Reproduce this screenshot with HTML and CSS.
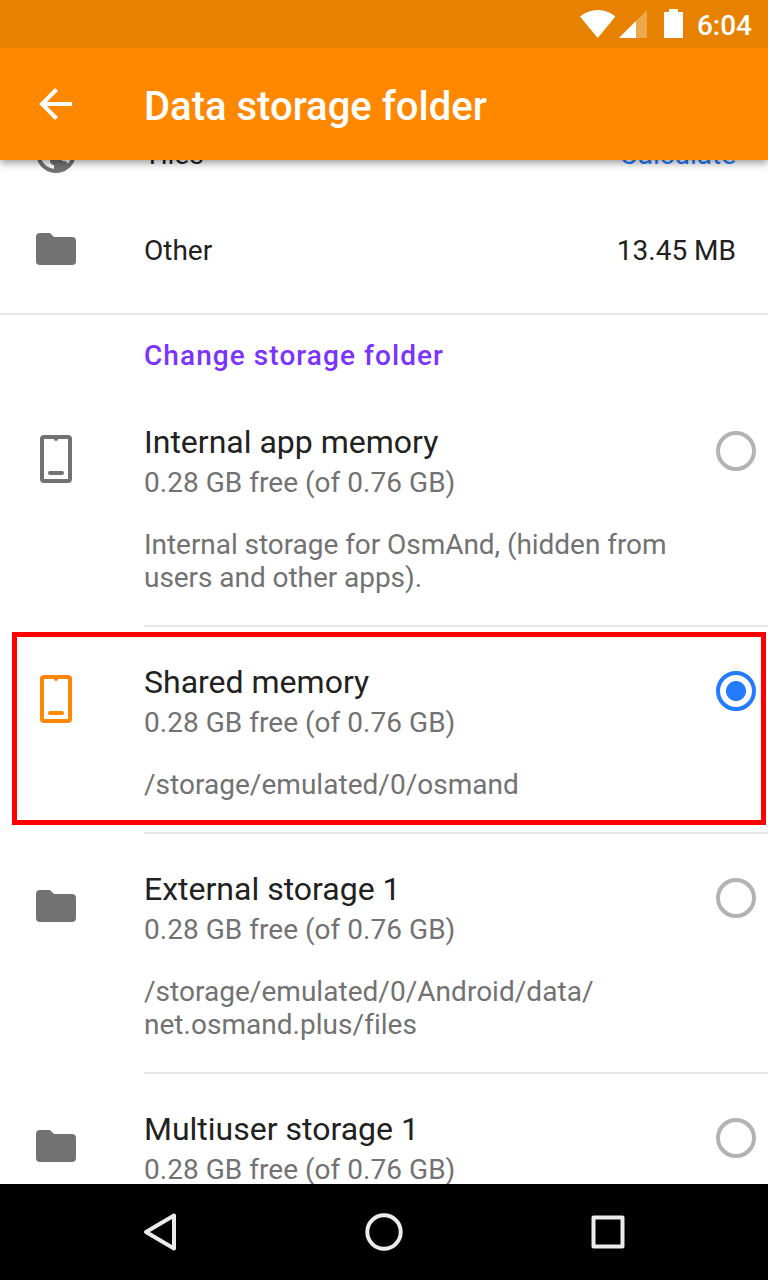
FILE: index.html
```html
<!DOCTYPE html>
<html lang="en">
<head>
<meta charset="utf-8">
<title>Data storage folder</title>
<link rel="stylesheet" href="styles.css">
</head>
<body>
<svg class="defs" width="0" height="0" aria-hidden="true">
  <symbol id="folder" viewBox="0 0 24 24"><path d="M4 4h4.400c.5 0 .8.1 1.100.5L11 6h9a2 2 0 0 1 2 2v10a2 2 0 0 1-2 2H4a2 2 0 0 1-2-2V6a2 2 0 0 1 2-2z" fill="currentColor"/></symbol>
  <symbol id="phone" viewBox="0 0 48 48"><rect x="10" y="2" width="28" height="44" rx="2" fill="none" stroke="currentColor" stroke-width="4"/><path d="M22 3h4v1a2 2 0 0 1-4 0z" fill="currentColor"/><rect x="16" y="36" width="16" height="4" rx="2" fill="currentColor"/></symbol>
  <symbol id="globe" viewBox="0 0 24 24"><path fill="currentColor" d="M12 2C6.480 2 2 6.480 2 12s4.480 10 10 10 10-4.480 10-10S17.520 2 12 2zm-1 17.930c-3.950-.49-7-3.850-7-7.930 0-.62.080-1.210.21-1.790L9 15v1c0 1.100.9 2 2 2v1.930zm6.900-2.540c-.26-.81-1-1.390-1.900-1.390h-1v-3c0-.55-.45-1-1-1H8v-2h2c.55 0 1-.45 1-1V7h2c1.100 0 2-.9 2-2v-.41c2.930 1.190 5 4.060 5 7.410 0 2.080-.8 3.970-2.100 5.390z"/></symbol>
</svg>
<div class="screen">
  <div class="status">
    <svg width="36" height="28" viewBox="0 0 36 28"><path d="M0 6.500C5 2.200 11.200 0 17.700 0s12.800 2.200 17.700 6.500L17.700 28z" fill="#fff"/></svg>
    <svg class="signal" width="28" height="28" viewBox="0 0 28 28"><path d="M0 28L28 0v28z" fill="#fff" fill-opacity=".3"/><path d="M0 28L17 11v17z" fill="#fff"/></svg>
    <svg class="battery" width="19" height="29" viewBox="0 0 19 29"><path d="M0 3h5V0h9v3h5v26H0z" fill="#fff"/></svg>
    <span class="clock">6:04</span>
  </div>
  <header class="appbar">
    <svg class="back" width="34" height="32" viewBox="0 0 34 32"><path d="M17.500 1.500L3 16l14.500 14.500M3 16h30" fill="none" stroke="#fff" stroke-width="4"/></svg>
    <h1 class="title">Data storage folder</h1>
  </header>
  <main class="content">
    <div class="usage">
      <div class="row"><svg class="icon"><use href="#globe"/></svg><span class="label">Tiles</span><span class="action">Calculate</span></div>
      <div class="row"><svg class="icon"><use href="#folder"/></svg><span class="label">Other</span><span>13.45 MB</span></div>
    </div>
    <h2 class="heading">Change storage folder</h2>
    <section class="option">
      <svg class="icon"><use href="#phone"/></svg>
      <div class="body"><div class="name">Internal app memory</div><div class="free">0.28 GB free (of 0.76 GB)</div><p class="desc note">Internal storage for OsmAnd, (hidden from<br>users and other apps).</p></div>
      <span class="radio"></span>
    </section>
    <section class="option selected">
      <svg class="icon"><use href="#phone"/></svg>
      <div class="body"><div class="name">Shared memory</div><div class="free">0.28 GB free (of 0.76 GB)</div><p class="desc">/storage/emulated/0/osmand</p></div>
      <span class="radio"></span>
      <div class="highlight"></div>
    </section>
    <section class="option">
      <svg class="icon"><use href="#folder"/></svg>
      <div class="body"><div class="name">External storage 1</div><div class="free">0.28 GB free (of 0.76 GB)</div><p class="desc">/storage/emulated/0/Android/data/<br>net.osmand.plus/files</p></div>
      <span class="radio"></span>
    </section>
    <section class="option">
      <svg class="icon"><use href="#folder"/></svg>
      <div class="body"><div class="name">Multiuser storage 1</div><div class="free">0.28 GB free (of 0.76 GB)</div></div>
      <span class="radio"></span>
    </section>
  </main>
  <nav class="navbar">
    <svg width="40" height="40" viewBox="0 0 40 40"><path d="M6 20L34 3.500v33z"/></svg>
    <svg width="40" height="40" viewBox="0 0 40 40"><circle cx="20" cy="20" r="16.700"/></svg>
    <svg width="40" height="40" viewBox="0 0 40 40"><rect x="5.500" y="5.500" width="29" height="29"/></svg>
  </nav>
</div>
</body>
</html>
```
FILE: styles.css
```css
* { box-sizing: border-box; }
body { margin: 0; font-family: Roboto, "Liberation Sans", sans-serif; font-size: 28px; line-height: 33px; color: #212121; }
h1, h2, p { margin: 0; }
.defs { display: block; }
.screen { display: flex; flex-direction: column; width: 768px; height: 1280px; overflow: hidden; background: #fff; }
.status { flex: none; display: flex; justify-content: flex-end; align-items: flex-start; height: 48px; padding: 10px 16px 0 0; background: #e68200; color: #fff; }
.signal { margin-left: 3px; }
.battery { margin: -1px 0 0 17px; }
.clock { margin: -1px 0 0 14px; font-weight: 500; }
.appbar { flex: none; display: flex; align-items: center; height: 112px; padding-left: 39px; background: #ff8800; color: #fff; z-index: 1; box-shadow: 0 3px 8px rgba(0, 0, 0, .4); clip-path: inset(0 0 -16px 0); }
.title { margin: 6px 0 0 71px; font-size: 40px; line-height: 48px; font-weight: 500; }
.content { flex: 1; min-height: 0; overflow: hidden; display: flex; flex-direction: column; }
.content > * { flex: none; }
.usage { margin-top: -55px; padding-bottom: 16px; border-bottom: 2px solid #e6e6e6; }
.row { display: flex; align-items: center; height: 96px; padding: 0 32px; }
.icon { flex: none; width: 48px; height: 48px; color: #727272; }
.label { flex: 1; margin-left: 64px; }
.row span { padding-top: 3px; }
.action { color: #237bff; }
.heading { height: 72px; padding: 24px 0 0 144px; font-size: 28px; line-height: 33px; font-weight: 500; letter-spacing: 1.070px; color: #7b33ff; }
.option { position: relative; display: flex; align-items: flex-start; }
.option .icon { margin: 48px 64px 0 32px; }
.body { flex: 1; padding: 36px 0 31px; border-bottom: 2px solid #e6e6e6; }
.name { font-size: 32px; line-height: 38px; }
.free { margin-top: 5px; color: #727272; letter-spacing: .03px; }
.desc { margin-top: 29px; color: #727272; letter-spacing: .03px; }
.note { letter-spacing: -.05px; }
.radio { position: absolute; top: 44px; right: 12px; width: 40px; height: 40px; border: 4px solid #b3b3b3; border-radius: 50%; }
.selected .icon { color: #ff8800; }
.selected .radio { border-color: #237bff; background: radial-gradient(circle, #237bff 9.600px, transparent 10.300px); }
.highlight { position: absolute; top: 5px; right: 2px; bottom: 9px; left: 12px; border: 5px solid #f00; }
.navbar { flex: none; display: flex; justify-content: center; align-items: center; gap: 184px; height: 96px; background: #000; }
.navbar svg { fill: none; stroke: #ebebeb; stroke-width: 4; stroke-linejoin: round; }
```
